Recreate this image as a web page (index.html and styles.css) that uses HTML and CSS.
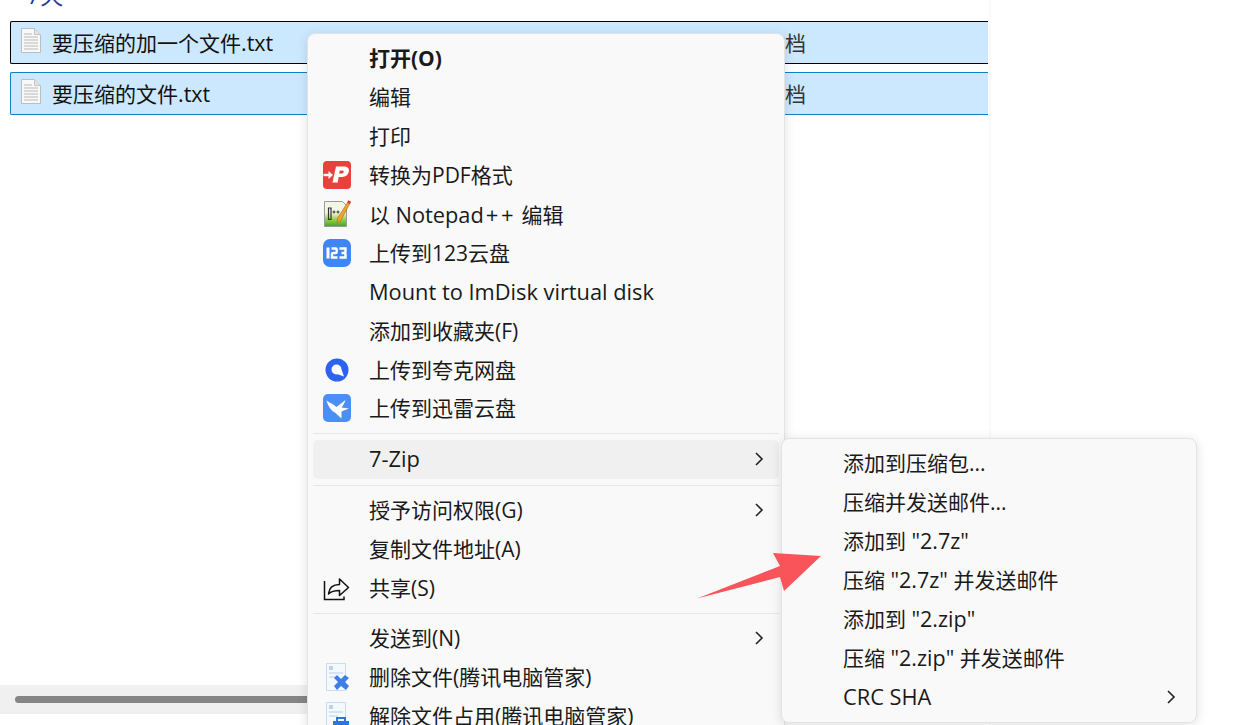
FILE: index.html
```html
<!DOCTYPE html>
<html lang="zh-CN">
<head>
<meta charset="utf-8">
<title>压缩文件</title>
<link rel="stylesheet" href="styles.css">
</head>
<body>
<div class="screen">
  <section class="pane">
    <div class="group-head"><span>7天</span></div>
    <div class="file file-focus">
      <svg class="file-icon" viewBox="0 0 20 25"><path d="M.5.5h13l6 6v18H.5z" fill="#f8f8f8" stroke="#bdbdbd"/><path d="M13.500.5v6h6" fill="#e4e4e4" stroke="#c4c4c4"/><path d="M3 6h8M3 9h14M3 12h14M3 15h14M3 18h14M3 21h14" stroke="#b9b9b9"/></svg>
      <span class="file-name">要压缩的加一个文件<span class="ext">.txt</span></span>
      <span class="file-type">文本文档</span>
    </div>
    <div class="file file-sel">
      <svg class="file-icon" viewBox="0 0 20 25"><path d="M.5.5h13l6 6v18H.5z" fill="#f8f8f8" stroke="#bdbdbd"/><path d="M13.500.5v6h6" fill="#e4e4e4" stroke="#c4c4c4"/><path d="M3 6h8M3 9h14M3 12h14M3 15h14M3 18h14M3 21h14" stroke="#b9b9b9"/></svg>
      <span class="file-name">要压缩的文件<span class="ext">.txt</span></span>
      <span class="file-type">文本文档</span>
    </div>
    <div class="hscroll"><div class="hthumb"></div></div>
  </section>

  <nav class="menu menu-main">
    <div class="item bold"><span class="ico"></span><span>打开(O)</span></div>
    <div class="item"><span class="ico"></span><span>编辑</span></div>
    <div class="item"><span class="ico"></span><span>打印</span></div>
    <div class="item"><span class="ico">
      <svg viewBox="0 0 28 28" width="28" height="28"><rect width="28" height="28" rx="4" fill="#e8403a"/><path d="M.5 14h5.500" stroke="#fff" stroke-width="2.400"/><path d="M5.500 10l4.500 4-4.500 4z" fill="#fff"/><path d="M13 5.500h8c4 0 5.500 2.300 4.800 5.300-.7 3-3 5.200-6.800 5.200h-3.300l-1 5.500h-5.200z" fill="#fff"/><path d="M16.800 9.500l-.7 3h3c1.900 0 2.300-3 .4-3z" fill="#e8403a"/></svg>
    </span><span>转换为PDF格式</span></div>
    <div class="item"><span class="ico">
      <svg viewBox="0 0 28 28" width="28" height="28"><defs><linearGradient id="npp" x1="0" y1="0" x2="0" y2="1"><stop offset=".45" stop-color="#f4f6e4"/><stop offset=".7" stop-color="#9ad24a"/><stop offset="1" stop-color="#3fa52e"/></linearGradient></defs><path d="M1.500 1.500h18l4 4v21h-22z" fill="url(#npp)" stroke="#9a9a9a"/><path d="M5.500 8v11.500h2.500V8z" fill="none" stroke="#333" stroke-width="1.200"/><path d="M9.500 12h3m-1.500-1.500v3M13.500 12h3m-1.500-1.500v3" stroke="#333"/><path d="M25.500 1l2 1.200-9.500 18-4 3 .6-5z" fill="#eda62a" stroke="#a8641a" stroke-width=".6"/><path d="M25.500.3l2.400 1.500-1.200 2.100-2.400-1.500z" fill="#d3382c"/></svg>
    </span><span>以 <span class="latin">Notepad</span><span class="plus">++</span> 编辑</span></div>
    <div class="item"><span class="ico">
      <svg viewBox="0 0 28 28" width="28" height="28"><rect width="28" height="28" rx="7" fill="#3e85f5"/><path d="M5 8.500v11" stroke="#fff" stroke-width="3"/><path d="M8.500 9.500h4.200a1 1 0 0 1 1 1v2.500a1 1 0 0 1-1 1H10a1 1 0 0 0-1 1v3.500h5.500M16.500 9.500h6v3a1.500 1.500 0 0 1-1.500 1.500h-2.500H21a1.500 1.500 0 0 1 1.500 1.500v3h-6" fill="none" stroke="#fff" stroke-width="2.400"/></svg>
    </span><span>上传到123云盘</span></div>
    <div class="item"><span class="ico"></span><span class="latin">Mount to ImDisk virtual disk</span></div>
    <div class="item"><span class="ico"></span><span>添加到收藏夹(F)</span></div>
    <div class="item"><span class="ico">
      <svg viewBox="0 0 28 28" width="28" height="28"><circle cx="14" cy="14" r="11.500" fill="#2b62f0"/><circle cx="13.500" cy="13.500" r="5" fill="#fff"/><path d="M14 18l7 2.500-2.500-7z" fill="#fff"/></svg>
    </span><span>上传到夸克网盘</span></div>
    <div class="item"><span class="ico">
      <svg viewBox="0 0 28 28" width="28" height="28"><rect width="28" height="28" rx="5" fill="#4a8ff7"/><path d="M3.500 6.500C7 9 10 10 13.500 13L22.500 6C21.500 9 20 11.500 18.500 13.500L26 14.500 18.500 17.500 18.500 24.500 12.500 19C8 17 5 12 3.500 6.500z" fill="#fff"/></svg>
    </span><span>上传到迅雷云盘</span></div>
    <div class="sep sep-a"></div>
    <div class="item hover"><span class="ico"></span><span class="latin">7-Zip</span><svg class="chev" viewBox="0 0 10 16"><path d="M2 2l6 6-6 6"/></svg></div>
    <div class="sep sep-b"></div>
    <div class="item"><span class="ico"></span><span>授予访问权限(G)</span><svg class="chev" viewBox="0 0 10 16"><path d="M2 2l6 6-6 6"/></svg></div>
    <div class="item"><span class="ico"></span><span>复制文件地址(A)</span></div>
    <div class="item"><span class="ico">
      <svg viewBox="0 0 28 28" width="28" height="28" fill="none" stroke="#111" stroke-width="1.500"><path d="M1.500 7v18.500H21v-3"/><path d="M5.500 20c.5-6 4.500-9.500 11-9.500V5l9 8.500-9 8v-5c-5 0-8.500 1-11 3.500z" stroke-linejoin="round"/></svg>
    </span><span>共享(S)</span></div>
    <div class="sep sep-c"></div>
    <div class="item"><span class="ico"></span><span>发送到(N)</span><svg class="chev" viewBox="0 0 10 16"><path d="M2 2l6 6-6 6"/></svg></div>
    <div class="item"><span class="ico">
      <svg viewBox="0 0 28 28" width="28" height="28"><path d="M3.500.5h19v27h-19z" fill="#f4f9fe" stroke="#c5dcf2"/><path d="M6 3h4v4H6z" fill="#bcd3ee"/><path d="M6 10h14M6 14h9" stroke="#cbdcee" stroke-width="1.500"/><path d="M11 15l3-3 4 4 4-4 4 3-4 4 4 4-3 4-5-4-4 4-3-4 4-4z" fill="#3e7fe6"/></svg>
    </span><span>删除文件(腾讯电脑管家)</span></div>
    <div class="item"><span class="ico">
      <svg viewBox="0 0 28 28" width="28" height="28"><path d="M3.500.5h19v27h-19z" fill="#f4f9fe" stroke="#c5dcf2"/><path d="M6 3h4v4H6z" fill="#bcd3ee"/><path d="M6 10h14M6 14h9" stroke="#cbdcee" stroke-width="1.500"/><path d="M10 19h16v9H10z" fill="#2f74e0"/><path d="M14 19v-3h8v3" fill="none" stroke="#2f74e0" stroke-width="2"/></svg>
    </span><span>解除文件占用(腾讯电脑管家)</span></div>
  </nav>

  <nav class="menu menu-sub">
    <div class="item"><span>添加到压缩包...</span></div>
    <div class="item"><span>压缩并发送邮件...</span></div>
    <div class="item"><span>添加到 <span class="quoted">"2.7z"</span></span></div>
    <div class="item"><span>压缩 <span class="quoted">"2.7z"</span> 并发送邮件</span></div>
    <div class="item"><span>添加到 <span class="quoted">"2.zip"</span></span></div>
    <div class="item"><span>压缩 <span class="quoted">"2.zip"</span> 并发送邮件</span></div>
    <div class="item"><span class="latin">CRC SHA</span><svg class="chev" viewBox="0 0 10 16"><path d="M2 2l6 6-6 6"/></svg></div>
  </nav>

  <svg class="arrow" viewBox="0 0 130 50" width="130" height="50"><path d="M0 47.500L83 15 76 2l48 3-37 35-4-14z" fill="#f9545a"/></svg>
</div>
</body>
</html>
```
FILE: styles.css
```css
* { box-sizing: border-box; }
html, body { margin: 0; padding: 0; background: #fff; }
body {
  font-family: "Open Sans", "Noto Sans", "Noto Sans CJK SC", sans-serif;
  font-size: 21px;
  color: #1a1a1a;
}
.screen {
  position: relative;
  width: 1244px;
  height: 725px;
  overflow: hidden;
  background: #fff;
}
.pane {
  width: 991px;
  height: 725px;
  padding-bottom: 11px;
  display: flex;
  flex-direction: column;
  border-right: 2px solid #f9f9f9;
}
.group-head {
  height: 21px;
  padding-left: 27px;
  overflow: hidden;
  color: #2b3a8f;
  font-size: 23px;
  line-height: 1;
  flex: none;
}
.group-head span { display: block; margin-top: -16px; }
.file {
  flex: none;
  height: 43px;
  margin-left: 10px;
  width: 978px;
  display: flex;
  align-items: center;
  background: #cce8ff;
  border: 1px solid #0f7fc7;
  border-right: 0;
  border-radius: 2px 0 0 2px;
  padding-left: 10px;
  color: #111;
}
.file-focus { border-color: #000; }
.file-sel { margin-top: 8px; }
.file-icon { width: 20px; height: 25px; flex: none; margin-top: -4px; }
.file-name { width: 670px; margin-left: 11px; flex: none; line-height: 28px; white-space: nowrap; }
.ext { font-size: 21.500px; }
.file-type { color: #333; line-height: 28px; }
.hscroll {
  margin-top: auto;
  height: 29px;
  background: #f0f0f0;
  padding: 11px 15px 0;
  flex: none;
}
.hthumb { height: 7px; background: #858585; border-radius: 4px; }
.menu {
  position: absolute;
  background: #f9f9f9;
  border: 1px solid #e3e3e3;
  border-radius: 8px;
  box-shadow: 0 2px 12px rgba(0, 0, 0, .12);
  display: flex;
  flex-direction: column;
}
.menu-main {
  left: 307px;
  top: 33px;
  width: 478px;
  padding: 5px 5px 0;
}
.menu-sub {
  left: 781px;
  top: 438px;
  width: 416px;
  height: 285px;
  padding: 5px 5px 0;
}
.item {
  flex: none;
  height: 38.900px;
  display: flex;
  align-items: center;
  border-radius: 5px;
  white-space: nowrap;
  line-height: 28px;
}
.item.bold { font-weight: 700; }
.item.hover { background: #f0f0f0; }
.latin { font-size: 21.800px; }
.plus { font-size: 22px; letter-spacing: 2.500px; margin-left: 2px; }
.quoted { font-size: 21.500px; }
.ico {
  width: 28px;
  height: 28px;
  margin-left: 10px;
  margin-right: 18px;
  flex: none;
  display: block;
}
.ico svg { display: block; }
.menu-sub .item { padding-left: 56px; }
.chev {
  width: 10px;
  height: 16px;
  margin-left: auto;
  margin-right: 15px;
  fill: none;
  stroke: #222;
  stroke-width: 1.600;
}
.sep { flex: none; height: 1px; background: #e6e6e6; }
.sep-a { margin-top: 5px; margin-bottom: 6px; }
.sep-b { margin-top: 6px; margin-bottom: 5px; }
.sep-c { margin-top: 6px; margin-bottom: 4px; }
.arrow { position: absolute; left: 697px; top: 551px; }
```
